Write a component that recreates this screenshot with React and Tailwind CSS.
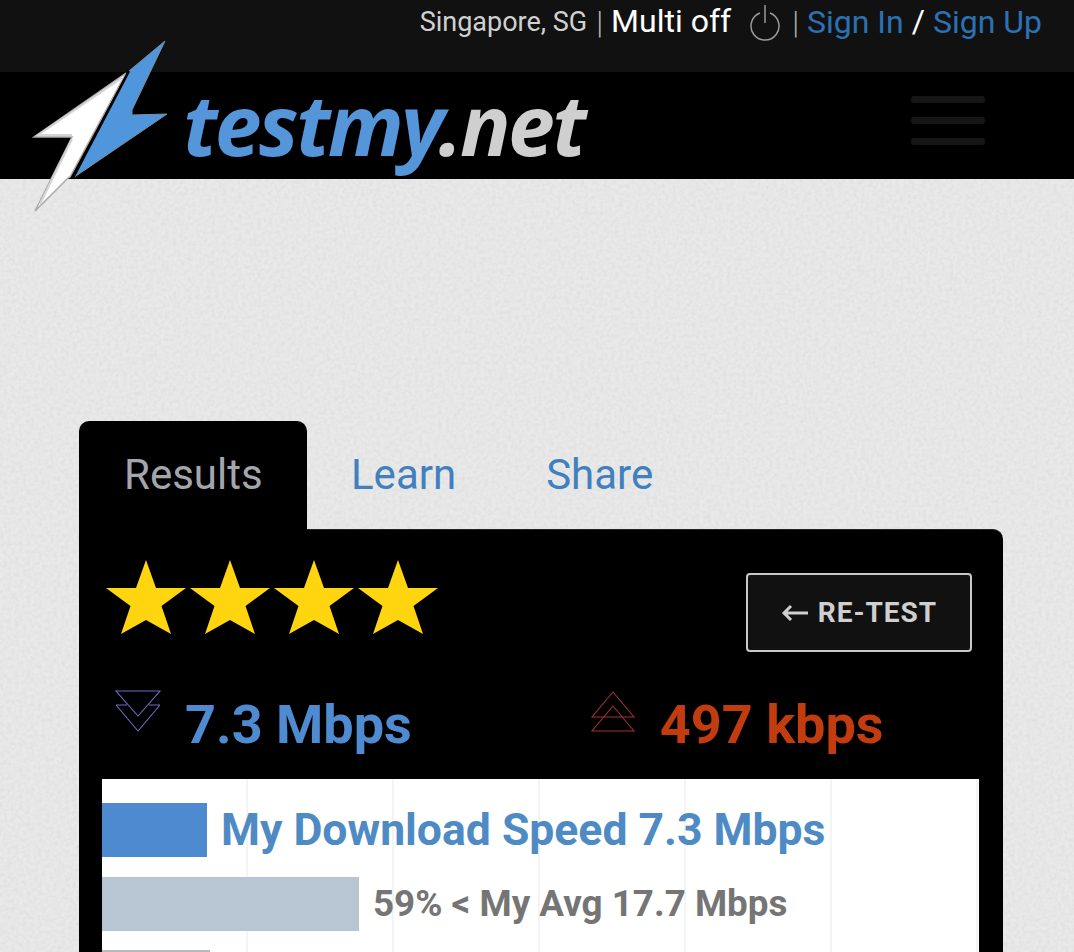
const Star = () => (
  <svg width="84" height="76" viewBox="0 0 84 76" className="shrink-0">
    <polygon points="42,0 52,28 82,28 57.5,46 67,74 42,60 17,74 26.5,46 2,28 32,28" fill="#ffd50f" />
  </svg>
);

function Logo() {
  return (
    <svg width="145" height="180" viewBox="0 0 145 180" className="absolute left-[30px] top-[36px]">
      <polygon points="135,5 99,35 43,142 137,78 102,79 102,74" fill="#4f96dc" stroke="#7d8f9f" strokeWidth="1" />
      <polygon points="96,37 4,101 42,101 5,175 38,142 40,141" fill="#ffffff" stroke="#a9a9a9" strokeWidth="1.5" />
      <path d="M99 35 L43 142" stroke="#000000" strokeWidth="2.5" fill="none" />
      <path d="M92 42 L8 99 H42 M42 103 L10 168" stroke="#d4d4d4" strokeWidth="2" fill="none" />
    </svg>
  );
}

function Grain() {
  return (
    <svg className="absolute inset-0 h-full w-full" aria-hidden="true">
      <filter id="paper">
        <feTurbulence type="fractalNoise" baseFrequency="0.26" numOctaves="3" seed="4" />
        <feColorMatrix values="0 0 0 0 0.5 0 0 0 0 0.5 0 0 0 0 0.5 0.4 0 0 0 -0.14" />
      </filter>
      <rect width="100%" height="100%" filter="url(#paper)" />
    </svg>
  );
}

const ChevronsDown = () => (
  <svg width="48" height="44" viewBox="0 0 48 44" className="shrink-0" fill="none" stroke="#6a6fc4" strokeWidth="1.1">
    <polygon points="2,1 46,1 24,26" />
    <path d="M2 15 H13 M35 15 H46 M2 15 L24 41 L46 15" />
  </svg>
);

const ChevronsUp = () => (
  <svg width="48" height="44" viewBox="0 0 48 44" className="shrink-0" fill="none" stroke="#a03030" strokeWidth="1.1">
    <polygon points="25,2 46,27 4,27" />
    <polygon points="25,16 46,41 4,41" />
  </svg>
);

export default function App() {
  return (
    <div className="relative h-[952px] w-[1074px] overflow-hidden bg-[#e9e9e9] font-['Roboto',sans-serif]">
      <Grain />
      <div className="relative">
        <header className="flex h-[72px] items-start justify-end bg-[#111111] pr-[32px] pt-[2px]">
          <span className="text-[27px] leading-[40px] text-[#d0d0d0]">Singapore, SG</span>
          <span className="ml-[9px] text-[31px] font-light leading-[42px] text-[#b0b0b0]">|</span>
          <span className="ml-[8px] text-[32px] leading-[38px] text-white">Multi off</span>
          <svg width="30" height="37" viewBox="0 0 30 37" className="ml-[19px] mt-[3px]" fill="none" stroke="#9a9a9a" strokeWidth="1.5">
            <path d="M10 8 A14 14 0 1 0 20 8" />
            <path d="M15 0 V18" />
          </svg>
          <span className="ml-[12px] text-[31px] font-light leading-[42px] text-[#a8a8a8]">|</span>
          <a className="ml-[8px] text-[32px] leading-[40px] text-[#2b71b3]">Sign In</a>
          <span className="ml-[8px] text-[32px] leading-[38px] text-white">/</span>
          <a className="ml-[8px] text-[32px] leading-[40px] text-[#2b71b3]">Sign Up</a>
        </header>
        <nav className="flex h-[107px] items-start justify-between bg-black pl-[183px] pr-[89px]">
          <div className="mt-[2px] whitespace-nowrap font-['Noto_Sans',sans-serif] text-[84px] font-bold italic leading-[100px] tracking-[-2.7px]">
            <span className="text-[#5595da]">testmy</span>
            <span className="text-[#cfcfcf]">.net</span>
          </div>
          <div className="mt-[24px] flex w-[74px] flex-col gap-[14px]">
            <div className="h-[7px] rounded-[3px] bg-[#161616]" />
            <div className="h-[7px] rounded-[3px] bg-[#161616]" />
            <div className="h-[7px] rounded-[3px] bg-[#161616]" />
          </div>
        </nav>
        <main className="ml-[79px] mt-[242px] w-[924px]">
          <div className="flex h-[108px] items-start text-[42px] leading-[47px]">
            <div className="relative z-10 h-[109px] w-[228px] rounded-t-[10px] bg-black pl-[45px] pt-[30px] text-[#a4a6ad]">Results</div>
            <a className="ml-[44px] pt-[30px] text-[#4180bf]">Learn</a>
            <a className="ml-[90px] pt-[30px] text-[#4180bf]">Share</a>
          </div>
          <section className="rounded-tr-[10px] border-t border-[#222222] bg-black pl-[23px] pr-[24px] pt-[30px]">
            <div className="flex items-start justify-between">
              <div className="ml-[2px] flex">
                <Star />
                <Star />
                <Star />
                <Star />
              </div>
              <button className="mr-[7px] mt-[13px] flex h-[79px] w-[226px] items-center justify-center gap-[10px] rounded-[4px] border-2 border-[#c8c8c8] bg-[#111111] text-[28px] font-bold tracking-[1px] text-[#cfcfcf]">
                <svg width="27" height="18" viewBox="0 0 27 18" fill="none" stroke="#cfcfcf" strokeWidth="3">
                  <path d="M27 9 H3 M10 2 L3 9 L10 16" />
                </svg>
                <span>RE-TEST</span>
              </button>
            </div>
            <div className="mt-[38px] flex h-[89px] items-start pl-[12px]">
              <ChevronsDown />
              <div className="ml-[23px] text-[54px] font-bold leading-[70px] text-[#4f8bd0]">7.3 Mbps</div>
              <div className="ml-[176px]">
                <ChevronsUp />
              </div>
              <div className="ml-[24px] text-[54px] font-bold leading-[70px] text-[#c23c10]">497 kbps</div>
            </div>
            <div className="h-[173px] bg-[repeating-linear-gradient(90deg,#ffffff_0,#ffffff_144px,#f4f4f4_144px,#f4f4f4_146px)] pt-[24px]">
              <div className="flex h-[54px] items-center">
                <div className="h-full w-[105px] bg-[#4e8ad0]" />
                <span className="ml-[14px] text-[44.5px] font-bold text-[#4e8ac4]">My Download Speed 7.3 Mbps</span>
              </div>
              <div className="mt-[20px] flex h-[54px] items-center">
                <div className="h-full w-[257px] bg-[#b8c6d4]" />
                <span className="ml-[14px] text-[36.8px] font-bold text-[#757575]">59% &lt; My Avg 17.7 Mbps</span>
              </div>
              <div className="mt-[19px] h-[54px] w-[108px] bg-[#b5b9bc]" />
            </div>
          </section>
        </main>
      </div>
      <Logo />
    </div>
  );
}
